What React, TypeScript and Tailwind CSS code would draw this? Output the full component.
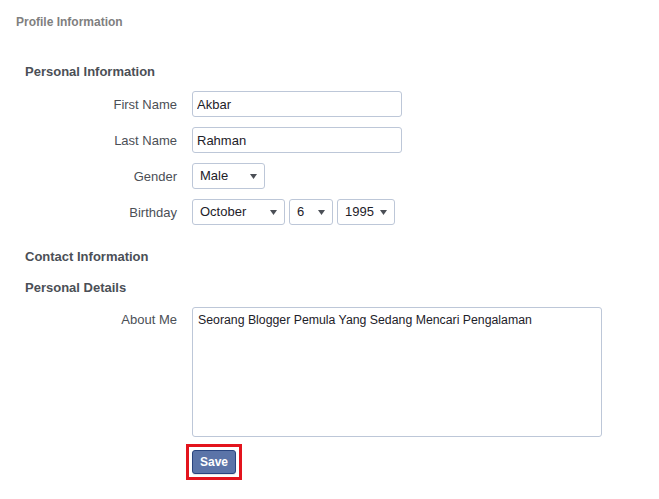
const labelCls = 'text-right text-[13px] leading-[15px] text-[#4b4f56]';
const boxCls =
  'h-[26px] border border-[#bdc7d8] rounded-[3px] bg-white text-[13px] text-[#1d2129]';
const headCls = 'text-[13px] leading-[18px] font-bold text-[#4b4f56]';

const Arrow = () => (
  <svg width="7" height="5" viewBox="0 0 7 5" className="shrink-0">
    <path d="M0 0h7L3.5 5z" fill="#4b4f56" />
  </svg>
);

interface FakeSelectProps {
  value: string;
  width: string;
}

const FakeSelect = ({ value, width }: FakeSelectProps) => {
  return (
    <div className={`${boxCls} ${width} flex items-center justify-between pl-[7px] pr-[7px]`}>
      <span>{value}</span>
      <Arrow />
    </div>
  );
};

const Row = ({ label, children }: { label: string; children: React.ReactNode }) => (
  <>
    <div className={`${labelCls} self-center`}>{label}</div>
    <div className="flex items-center gap-[4px]">{children}</div>
  </>
);

export default function App() {
  return (
    <div className="min-h-screen bg-white font-['Liberation_Sans',Arial,sans-serif]">
      <div className="px-[16px] pt-[14px] text-[12px] leading-[16px] font-bold text-[#7f7f7f]">
        Profile Information
      </div>

      <div className="pl-[25px]">
        <h3 className={`mt-[33px] ${headCls}`}>Personal Information</h3>

        <div className="mt-[10px] grid grid-cols-[152px_auto] gap-x-[15px] gap-y-[10px]">
          <Row label="First Name">
            <input
              readOnly
              value="Akbar"
              className={`${boxCls} w-[210px] pl-[4px] outline-none`}
            />
          </Row>
          <Row label="Last Name">
            <input
              readOnly
              value="Rahman"
              className={`${boxCls} w-[210px] pl-[4px] outline-none`}
            />
          </Row>
          <Row label="Gender">
            <FakeSelect value="Male" width="w-[73px]" />
          </Row>
          <Row label="Birthday">
            <FakeSelect value="October" width="w-[93px]" />
            <FakeSelect value="6" width="w-[44px]" />
            <FakeSelect value="1995" width="w-[58px]" />
          </Row>
        </div>

        <h3 className={`mt-[23px] ${headCls}`}>Contact Information</h3>
        <h3 className={`mt-[13px] ${headCls}`}>Personal Details</h3>

        <div className="mt-[10px] grid grid-cols-[152px_auto] gap-x-[15px]">
          <div className={`${labelCls} pt-[5px]`}>About Me</div>
          <div>
            <textarea
              readOnly
              value="Seorang Blogger Pemula Yang Sedang Mencari Pengalaman"
              className="block w-[410px] h-[130px] resize-none border border-[#bdc7d8] rounded-[3px] px-[5px] pt-[4px] text-[12.3px] leading-[16px] text-[#1d2129] outline-none"
            />
            <div className="mt-[7px] -ml-[6px] inline-block border-[3px] border-[#e3141d] p-[3px]">
              <button className="block w-[44px] h-[24px] rounded-[3px] border border-[#29447e] bg-[#5b74a8] text-[12px] font-bold text-white shadow-[0_1px_1px_rgba(0,0,0,0.1)]">
                Save
              </button>
            </div>
          </div>
        </div>
      </div>
    </div>
  );
}
